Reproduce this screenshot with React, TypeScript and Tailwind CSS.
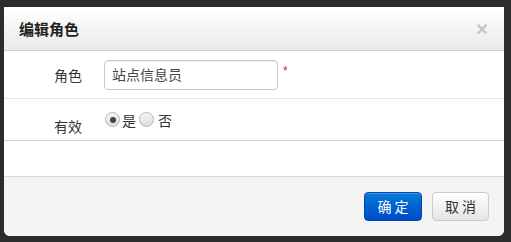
const cjk = "font-['Noto_Sans_CJK_SC','Noto_Sans',sans-serif]"

function Radio({ checked }: { checked?: boolean }) {
  return (
    <span className="w-[15px] h-[15px] rounded-full border border-[#b5b5b5] bg-gradient-to-b from-[#f4f4f4] to-[#dedede] flex items-center justify-center shadow-[inset_0_1px_1px_rgba(255,255,255,0.8)]">
      {checked && <span className="w-[6px] h-[6px] rounded-full bg-[#444]" />}
    </span>
  )
}

export default function App() {
  return (
    <div className={`w-[511px] h-[242px] bg-[#2c2c2c] pt-[7px] pl-[4px] ${cjk}`}>
      <div className="w-[500px] h-[229px] bg-white rounded-b-[6px] flex flex-col overflow-hidden">
        <div className="h-[44px] shrink-0 bg-gradient-to-b from-white to-[#eaeaea] border-b border-[#cfcfcf] flex items-center justify-between pl-[15px] pr-[16px]">
          <span className="text-[15px] font-bold text-[#222] leading-none">编辑角色</span>
          <span className="text-[20px] font-bold text-[#c4c4c4] leading-none font-['Liberation_Sans',sans-serif]">×</span>
        </div>

        <div className="h-[48px] shrink-0 border-b border-[#e6e6e6] flex items-center">
          <span className="w-[78px] text-right text-[14px] text-[#333] leading-none">角色</span>
          <div className="ml-[22px] w-[174px] h-[30px] border border-[#c8c8c8] rounded-[4px] flex items-center pl-[7px] text-[14px] text-[#444] shadow-[inset_0_1px_1px_rgba(0,0,0,0.06)]">
            站点信息员
          </div>
          <span className="ml-[5px] -mt-[8px] text-[12px] text-[#e0103a] leading-none font-['Liberation_Sans',sans-serif]">*</span>
        </div>

        <div className="h-[42px] shrink-0 border-b border-[#d4d4d4] flex items-start">
          <span className="mt-[20px] w-[78px] text-right text-[14px] text-[#333] leading-none">有效</span>
          <div className="ml-[23px] mt-[13px] flex items-center gap-[2px] text-[14px] text-[#333] leading-none">
            <Radio checked />
            <span className="mr-[1px]">是</span>
            <Radio />
            <span className="ml-[2px]">否</span>
          </div>
        </div>

        <div className="h-[36px] shrink-0 border-b border-[#d8d8d8]" />

        <div className="flex-1 bg-[#f4f4f4] flex items-center justify-end gap-[10px] pr-[15px]">
          <button className="w-[58px] h-[29px] rounded-[4px] border border-[#0045b8] bg-gradient-to-b from-[#0a7ad6] to-[#0049c6] text-white text-[14px] tracking-[3px] pl-[3px] shadow-[inset_0_1px_0_rgba(255,255,255,0.2)]">
            确定
          </button>
          <button className="w-[57px] h-[29px] rounded-[4px] border border-[#cbcbcb] bg-gradient-to-b from-white to-[#e4e4e4] text-[#333] text-[14px] tracking-[3px] pl-[3px] shadow-[inset_0_1px_0_rgba(255,255,255,0.6)]">
            取消
          </button>
        </div>
      </div>
    </div>
  )
}
